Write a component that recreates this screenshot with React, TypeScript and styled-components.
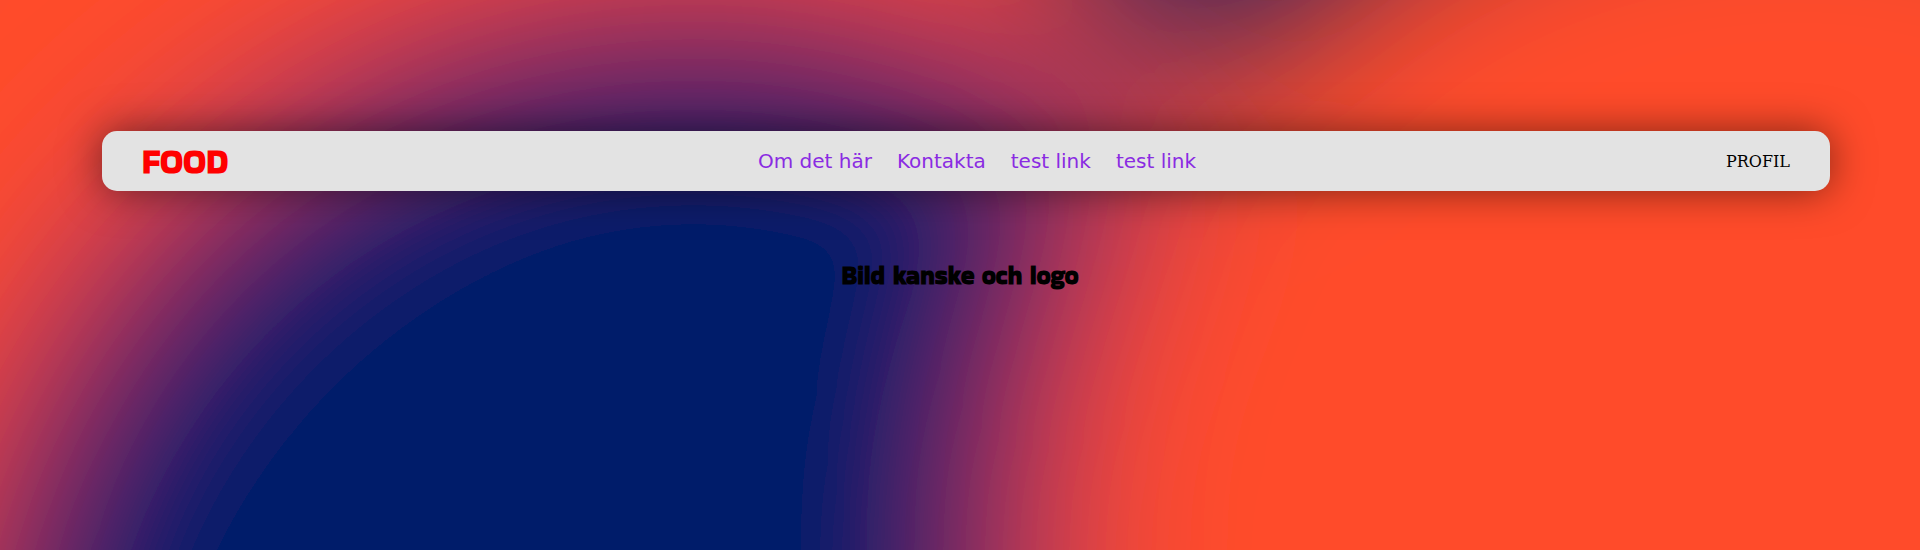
import React from "react";
import styled, { createGlobalStyle } from "styled-components";

const GlobalStyle = createGlobalStyle`
  html, body { margin: 0; padding: 0; overflow: hidden; }
`;

const Page = styled.div`
  position: relative;
  box-sizing: border-box;
  height: 550px;
  padding-top: 131px;
  overflow: hidden;
`;

const Backdrop = styled.svg`
  position: absolute;
  top: 0;
  left: 0;
  width: 1920px;
  height: 1280px;
`;

const NavBar = styled.nav`
  position: relative;
  display: flex;
  justify-content: space-between;
  align-items: center;
  box-sizing: border-box;
  height: 60px;
  margin: 0 90px 0 102px;
  padding: 0 40px;
  border-radius: 15px;
  background: #e3e3e3;
  box-shadow: 0 0 40px rgba(0, 0, 0, 0.5);
`;

const Brand = styled.span`
  width: 86px;
  padding-top: 1px;
  font: 700 33px/60px "Bakbak One", "Inter", sans-serif;
  color: #ff0000;
`;

const Links = styled.div`
  display: flex;
  gap: 25px;
`;

const NavLink = styled.a`
  font: 20px "DejaVu Sans", sans-serif;
  color: #8a2be2;
`;

const Profile = styled.span`
  font: 16px "DejaVu Serif", serif;
  color: #000;
`;

const Title = styled.h1`
  position: relative;
  margin: 67px 0 0;
  text-align: center;
  font: 700 25px/36px "Bakbak One", "Inter", sans-serif;
  color: #000;
`;

const links = ["Om det här", "Kontakta", "test link", "test link"];

export default function App() {
  return (
    <Page>
      <GlobalStyle />
      <Backdrop viewBox="0 0 900 600" aria-hidden="true">
        <defs>
          <filter id="blur" x="-10%" y="-10%" width="120%" height="120%">
            <feGaussianBlur stdDeviation="46" />
          </filter>
        </defs>
        <rect width="900" height="600" fill="#001c6b" />
        <g filter="url(#blur)">
          <circle cx="203" cy="137" r="357" fill="#ff4b29" />
          <circle cx="325" cy="349" r="357" fill="#001c6b" />
          <circle cx="841" cy="264" r="357" fill="#ff4b29" />
        </g>
      </Backdrop>
      <NavBar>
        <Brand>FOOD</Brand>
        <Links>
          {links.map((label, i) => (
            <NavLink key={i}>{label}</NavLink>
          ))}
        </Links>
        <Profile>PROFIL</Profile>
      </NavBar>
      <Title>Bild kanske och logo</Title>
    </Page>
  );
}
